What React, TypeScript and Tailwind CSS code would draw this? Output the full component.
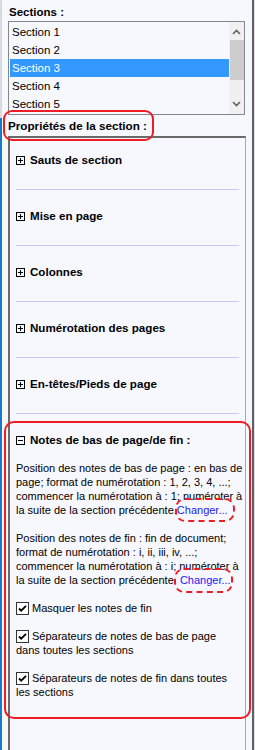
import React from "react";

const SECTIONS = ["Section 1", "Section 2", "Section 3", "Section 4", "Section 5"];
const GROUPS = ["Sauts de section", "Mise en page", "Colonnes", "Numérotation des pages", "En-têtes/Pieds de page"];

const PlusBox = ({ minus = false }: { minus?: boolean }) => (
  <svg width="9" height="9" viewBox="0 0 9 9" className="shrink-0">
    <rect x="0.5" y="0.5" width="8" height="8" fill="none" stroke="#000" />
    <line x1="2" y1="4.5" x2="7" y2="4.5" stroke="#000" />
    {!minus && <line x1="4.5" y1="2" x2="4.5" y2="7" stroke="#000" />}
  </svg>
);

const Check = () => (
  <svg width="13" height="13" viewBox="0 0 13 13" className="shrink-0">
    <rect x="0.5" y="0.5" width="12" height="12" fill="#fff" stroke="#333" />
    <path d="M3 6.5 L5.2 8.7 L10 3.8" fill="none" stroke="#000" strokeWidth="1.8" />
  </svg>
);

const Dashed = ({ className }: { className: string }) => (
  <div className={"absolute border-2 border-dashed border-[#ee1c24] rounded-[10px] " + className} />
);

const Lines = ({ lines, link }: { lines: string[]; link: string }) => (
  <div className="leading-[14px] whitespace-nowrap">
    {lines.map((l, i) => (
      <div key={i}>
        {l}
        {i === lines.length - 1 && <span className="text-[#1a1aff]">{link}</span>}
      </div>
    ))}
  </div>
);

export default function App() {
  return (
    <div
      className="relative w-[255px] h-[750px] overflow-hidden bg-[#f7f7fe] text-[11px] text-black flex"
      style={{ fontFamily: '"Liberation Sans", Arial, sans-serif' }}
    >
      {/* left edge */}
      <div className="w-[2px] shrink-0 flex flex-col">
        <div className="h-[118px] bg-[#d9d9e0]" />
        <div className="flex-1 bg-[#1979ca]" />
      </div>

      <div className="flex-1 flex flex-col pl-[6px]">
        <div className="h-[21px] pt-[5px] pl-[1px] font-bold text-[11.5px] leading-[14px]">Sections :</div>

        {/* list box */}
        <div className="w-[237px] h-[94px] border border-[#828790] bg-[#f7f7fe] flex">
          <div className="flex-1 pt-[1px] pl-[1px]">
            {SECTIONS.map((s) => (
              <div
                key={s}
                className={
                  "h-[18px] leading-[18px] pl-[2px] text-[11.5px] " +
                  (s === "Section 3" ? "bg-[#3399ff] text-white" : "")
                }
              >
                {s}
              </div>
            ))}
          </div>
          <div className="w-[15px] bg-[#f0f0f0] flex flex-col items-center">
            <svg width="9" height="18" viewBox="0 0 9 18">
              <path d="M1 12 L4.5 8.5 L8 12" fill="none" stroke="#606060" strokeWidth="1.6" />
            </svg>
            <div className="w-[14px] h-[40px] bg-[#cdcdcd]" />
            <div className="flex-1" />
            <svg width="9" height="18" viewBox="0 0 9 18">
              <path d="M1 6 L4.5 9.5 L8 6" fill="none" stroke="#606060" strokeWidth="1.6" />
            </svg>
          </div>
        </div>

        <div className="h-[21px] pt-[4px] font-bold text-[11.7px] leading-[14px]">Propriétés de la section :</div>

        {/* properties panel */}
        <div className="w-[238px] flex-1 border-t-2 border-l-2 border-r border-[#6a6a6a] border-r-[#a8a8b0] px-[6px]">
          {GROUPS.map((g, i) => (
            <div key={g}>
              <div className={"flex items-center gap-[5px] h-[14px] font-bold text-[11.6px] " + (i === 0 ? "mt-[15px]" : "mt-[19px]")}>
                <PlusBox />
                <span className="leading-[14px]">{g}</span>
              </div>
              <div className="mt-[22px] h-[1px] bg-[#c5c8ef] w-[223px]" />
            </div>
          ))}

          <div className="mt-[19px] flex items-center gap-[5px] h-[14px] font-bold text-[11.6px]">
            <PlusBox minus />
            <span className="leading-[14px]">Notes de bas de page/de fin :</span>
          </div>

          <div className="mt-[14px]">
            <Lines
              lines={[
                "Position des notes de bas de page : en bas de",
                "page; format de numérotation : 1, 2, 3, 4, ...;",
                "commencer la numérotation à : 1; numéroter à",
                "la suite de la section précédente.",
              ]}
              link="Changer..."
            />
          </div>
          <div className="mt-[14px]">
            <Lines
              lines={[
                "Position des notes de fin : fin de document;",
                "format de numérotation : i, ii, iii, iv, ...;",
                "commencer la numérotation à : i; numéroter à",
                "la suite de la section précédente. ",
              ]}
              link="Changer..."
            />
          </div>

          <div className="mt-[14px] flex flex-col gap-[14px] leading-[14px]">
            <div className="flex items-center gap-[3px]">
              <Check />
              <span>Masquer les notes de fin</span>
            </div>
            <div>
              <div className="flex items-center gap-[3px]">
                <Check />
                <span>Séparateurs de notes de bas de page</span>
              </div>
              <div>dans toutes les sections</div>
            </div>
            <div>
              <div className="flex items-center gap-[3px]">
                <Check />
                <span>Séparateurs de notes de fin dans toutes</span>
              </div>
              <div>les sections</div>
            </div>
          </div>
        </div>
      </div>

      {/* right edge */}
      <div className="absolute top-0 right-0 w-[3px] h-full flex">
        <div className="w-[2px] bg-[#5f5f66]" />
        <div className="w-[1px] bg-[#e0e0e6]" />
      </div>

      {/* annotations */}
      <div className="absolute left-[3px] top-[110px] w-[151px] h-[31px] border-2 border-[#ee1c24] rounded-[9px]" />
      <div className="absolute left-[4px] top-[421px] w-[247px] h-[298px] border-2 border-[#ee1c24] rounded-[10px]" />
      <Dashed className="left-[175px] top-[498px] w-[60px] h-[24px]" />
      <Dashed className="left-[174px] top-[568px] w-[59px] h-[25px]" />
    </div>
  );
}
